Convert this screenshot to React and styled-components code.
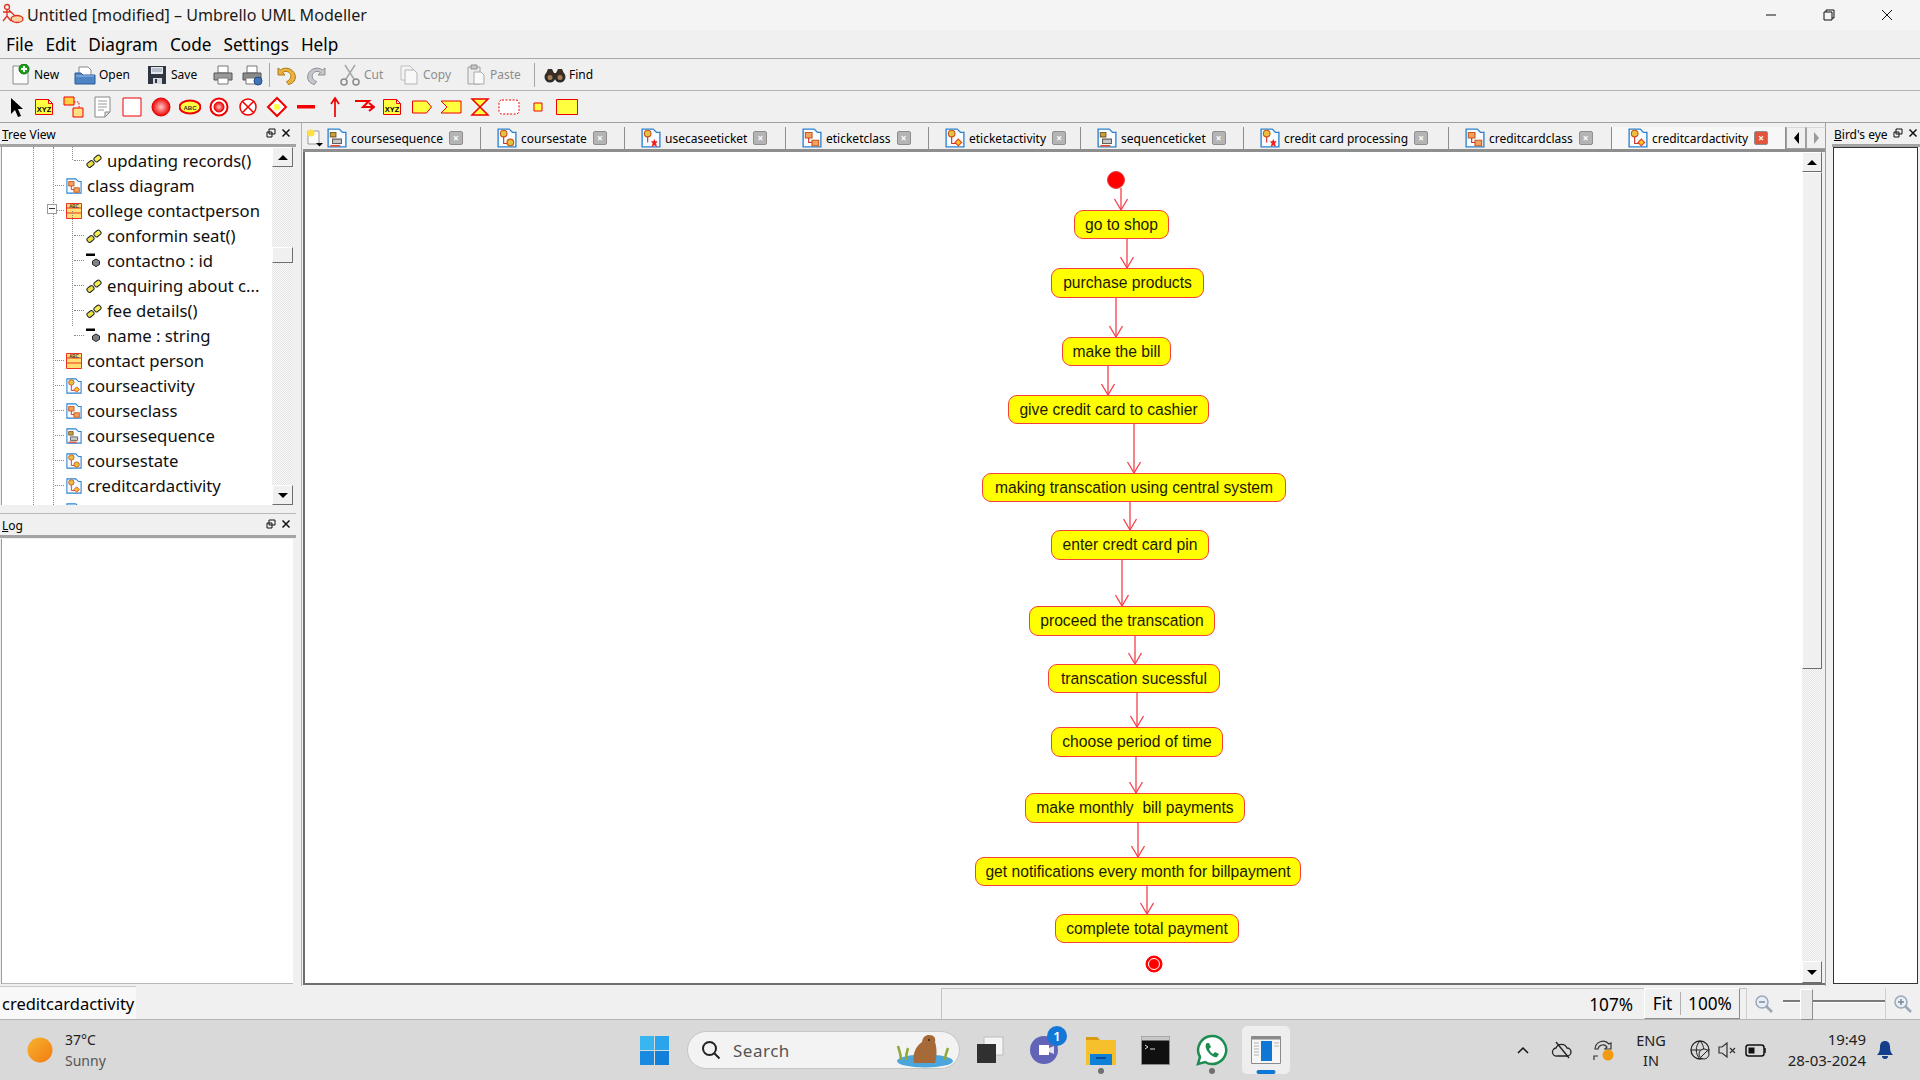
import React from "react";
import styled, { createGlobalStyle } from "styled-components";

const GlobalStyle = createGlobalStyle`
  html, body { margin: 0; padding: 0; background: #f0f0f0; }
  * { box-sizing: border-box; }
`;

const UI_FONT = `"Noto Sans", "Open Sans", sans-serif`;

const Window = styled.div`
  width: 1920px;
  height: 1080px;
  display: flex;
  flex-direction: column;
  overflow: hidden;
  font-family: ${UI_FONT};
  color: #000;
  background: #f0f0f0;
`;

const TitleBar = styled.div`
  height: 30px;
  flex: none;
  display: flex;
  align-items: center;
  background: #f4f4f4;
  padding: 0 4px 0 2px;
  font-size: 16.1px;
`;
const TitleText = styled.div`
  margin-left: 1px;
  flex: 1;
  color: #1a1a1a;
`;
const WinControl = styled.div`
  width: 58px;
  display: flex;
  justify-content: center;
`;

const MenuBar = styled.div`
  height: 29px;
  flex: none;
  display: flex;
  align-items: center;
  gap: 12px;
  padding-left: 6px;
  font-size: 17.2px;
  background: #f0f0f0;
  border-bottom: 1px solid #a8a8a8;
`;

const MainToolbar = styled.div`
  height: 32px;
  flex: none;
  display: flex;
  align-items: center;
  padding-left: 9px;
  border-bottom: 1px solid #b4b4b4;
`;
const ToolButton = styled.div`
  width: ${(p) => p.$w}px;
  flex: none;
  display: flex;
  align-items: center;
  gap: 3px;
  font-size: 12px;
  color: ${(p) => (p.$off ? "#8c8c8c" : "#000")};
`;
const ToolSep = styled.div`
  width: 1px;
  height: 24px;
  flex: none;
  background: #a6a6a6;
  margin-right: ${(p) => p.$after}px;
`;

const ShapeToolbar = styled.div`
  height: 32px;
  flex: none;
  display: flex;
  align-items: center;
  padding-left: 1px;
  border-bottom: 1px solid #a0a0a0;
`;
const ShapeCell = styled.div`
  width: 29px;
  flex: none;
  display: flex;
  justify-content: center;
`;

const Workspace = styled.div`
  height: 863px;
  flex: none;
  display: flex;
`;

const LeftDock = styled.div`
  width: 296px;
  flex: none;
  display: flex;
  flex-direction: column;
`;
const Splitter = styled.div`
  width: 7px;
  flex: none;
  padding-left: 5px;
  &::after {
    content: "";
    display: block;
    width: 1px;
    height: 100%;
    background: #b0b0b0;
  }
`;
const PanelHeader = styled.div`
  height: 24px;
  flex: none;
  display: flex;
  align-items: center;
  padding: 2px 5px 0 2px;
  font-size: 12px;
  border-bottom: 3px solid #a4a4a4;
  overflow: hidden;
  u { text-decoration: underline; }
`;
const PanelName = styled.div`
  flex: 1;
  white-space: nowrap;
  overflow: hidden;
`;
const PanelIcons = styled.div`
  display: flex;
  align-items: center;
  gap: 5px;
  flex: none;
  margin-bottom: 3px;
`;

const TreeBox = styled.div`
  height: 358px;
  flex: none;
  margin: 0 3px 0 1px;
  display: flex;
  background: #fff;
  border-left: 1px solid #9a9a9a;
  position: relative;
  overflow: hidden;
`;
const TreeRows = styled.div`
  flex: 1;
  padding-top: 1px;
  overflow: hidden;
`;
const TreeRowBox = styled.div`
  height: 25px;
  display: flex;
  align-items: center;
  padding-left: ${(p) => p.$indent}px;
  font-size: 16.7px;
  white-space: nowrap;
`;
const Connector = styled.div`
  width: ${(p) => p.$w}px;
  flex: none;
  border-bottom: 1px dotted #8a8a8a;
  margin-right: 2px;
`;
const RowLabel = styled.div`
  margin-left: 5px;
  color: #101010;
`;
const Guide = styled.div`
  position: absolute;
  left: ${(p) => p.$x}px;
  top: ${(p) => p.$top}px;
  height: ${(p) => p.$h}px;
  border-left: 1px dotted #8a8a8a;
`;
const Expander = styled.div`
  position: absolute;
  left: 45px;
  top: 57px;
  width: 10px;
  height: 10px;
  background: #fff;
  border: 1px solid #9a9a9a;
  &::after {
    content: "";
    position: absolute;
    left: 1px;
    right: 1px;
    top: 3px;
    height: 1px;
    background: #333;
  }
`;

const ScrollbarBox = styled.div`
  width: ${(p) => p.$w}px;
  flex: none;
  display: flex;
  flex-direction: column;
  background: repeating-conic-gradient(#e4e4e4 0 25%, #fafafa 0 50%) 0 0 / 2px 2px;
`;
const ScrollButton = styled.div`
  height: ${(p) => p.$h}px;
  flex: none;
  display: flex;
  align-items: center;
  justify-content: center;
  background: #f0f0f0;
  border: 1px solid;
  border-color: #fff #6e6e6e #6e6e6e #fff;
`;
const ScrollTrack = styled.div`
  flex: 1;
  padding-top: ${(p) => p.$top}px;
`;
const ScrollThumb = styled.div`
  height: ${(p) => p.$h}px;
  background: #f0f0f0;
  border: 1px solid;
  border-color: #fff #6e6e6e #6e6e6e #fff;
`;
const ArrowUp = styled.div`
  width: 0;
  height: 0;
  border: 5px solid transparent;
  border-top: 0;
  border-bottom: 5px solid #000;
`;
const ArrowDown = styled.div`
  width: 0;
  height: 0;
  border: 5px solid transparent;
  border-bottom: 0;
  border-top: 5px solid #000;
`;

const LogHeader = styled(PanelHeader)`
  margin-top: 8px;
  height: 25px;
  border-top: 1px solid #b8b8b8;
`;
const LogBody = styled.div`
  flex: 1;
  margin: 1px 3px 2px 1px;
  background: #fff;
  border-left: 1px solid #9a9a9a;
  border-bottom: 1px solid #b8b8b8;
`;

const Center = styled.div`
  width: 1523px;
  flex: none;
  display: flex;
  flex-direction: column;
  border-right: 1px solid #a0a0a0;
`;
const TabBar = styled.div`
  height: 29px;
  flex: none;
  display: flex;
  align-items: stretch;
  padding: 4px 0 0 3px;
  border-bottom: 3px solid #8e8e8e;
`;
const NewTab = styled.div`
  width: 21px;
  flex: none;
  display: flex;
  align-items: center;
`;
const Tab = styled.div`
  width: ${(p) => p.$w}px;
  flex: none;
  display: flex;
  align-items: center;
  padding-left: ${(p) => p.$pad}px;
  font-size: 12px;
  white-space: nowrap;
  background: ${(p) => (p.$active ? "#f7f7f7" : "transparent")};
  border-right: 1px solid #8e8e8e;
`;
const TabLabel = styled.div`
  margin: 0 6px 0 4px;
`;
const TabClose = styled.div`
  width: 14px;
  height: 14px;
  flex: none;
  display: flex;
  align-items: center;
  justify-content: center;
  border-radius: 2px;
  border: 1px solid #8e8e8e;
  font-size: 10px;
  line-height: 1;
  font-weight: 700;
  color: #fff;
  background: ${(p) => (p.$active ? "#e2543c" : "#b4b4b4")};
`;
const TabScroll = styled.div`
  width: 20px;
  flex: none;
  display: flex;
  align-items: center;
  justify-content: center;
  border: 1px solid #a0a0a0;
  border-top-color: #d8d8d8;
`;
const TriLeft = styled.div`
  width: 0;
  height: 0;
  border: 6px solid transparent;
  border-left: 0;
  border-right: 5px solid ${(p) => p.$c};
`;
const TriRight = styled.div`
  width: 0;
  height: 0;
  border: 6px solid transparent;
  border-right: 0;
  border-left: 5px solid ${(p) => p.$c};
`;

const CanvasFrame = styled.div`
  flex: 1;
  display: flex;
  background: #fff;
  border: 2px solid #6e6e6e;
  border-top: 0;
  border-right: 0;
  margin-bottom: 1px;
`;
const Canvas = styled.div`
  position: relative;
  flex: 1;
  overflow: hidden;
`;
const Wires = styled.svg`
  position: absolute;
  left: 0;
  top: 0;
`;
const ActivityNode = styled.div`
  position: absolute;
  left: ${(p) => p.$x}px;
  top: ${(p) => p.$y}px;
  width: ${(p) => p.$w}px;
  height: ${(p) => p.$h}px;
  display: flex;
  align-items: center;
  justify-content: center;
  background: #ffff00;
  border: 1.5px solid #f5403c;
  border-radius: 9px;
  font-family: "Liberation Sans", Arial, sans-serif;
  font-size: 15.65px;
  white-space: pre;
  color: #1a1a00;
`;
const CanvasGutter = styled.div`
  width: 3px;
  flex: none;
  background: #f0f0f0;
`;

const RightDock = styled.div`
  flex: 1;
  display: flex;
  flex-direction: column;
  margin-left: 6px;
`;
const BirdHeader = styled(PanelHeader)`
  padding-right: 2px;
`;
const BirdBody = styled.div`
  flex: 1;
  margin: 0 2px 2px 1px;
  background: #fff;
  border: 1px solid #333;
`;

const StatusBar = styled.div`
  height: 34px;
  flex: none;
  display: flex;
  align-items: stretch;
  border-bottom: 1px solid #b4b4b4;
`;
const StatusName = styled.div`
  width: 136px;
  flex: none;
  background: #f8f8f8;
  padding-left: 2px;
  font-size: 16.5px;
  display: flex;
  align-items: center;
  border-top: 1px solid #c8c8c8;
`;
const StatusMessage = styled.div`
  width: 805px;
  flex: none;
  border: 1px solid #c4c4c4;
  border-bottom: 0;
  border-right: 0;
  margin-top: 2px;
  margin-left: 805px;
  display: flex;
  justify-content: flex-end;
  align-items: center;
  font-size: 17.2px;
  padding-right: 113px;
`;
const ZoomControls = styled.div`
  flex: 1;
  display: flex;
  align-items: stretch;
  padding-top: 2px;
`;
const FitBox = styled.div`
  width: 96px;
  margin-left: -102px;
  margin-right: 6px;
  display: flex;
  align-items: center;
  font-size: 17.2px;
  background: #f0f0f0;
  border: 1px solid;
  border-color: #fff #8e8e8e #8e8e8e #fff;
  position: relative;
`;
const FitPart = styled.div`
  width: ${(p) => p.$w}px;
  text-align: center;
  border-right: ${(p) => (p.$line ? "1px solid #b0b0b0" : "0")};
`;
const ZoomButton = styled.div`
  width: ${(p) => p.$w}px;
  flex: none;
  display: flex;
  justify-content: center;
  align-items: center;
  border-left: 1px solid #d0d0d0;
`;
const SliderBox = styled.div`
  width: 102px;
  flex: none;
  margin-left: 2px;
  position: relative;
`;
const SliderLine = styled.div`
  position: absolute;
  left: 0;
  right: 0;
  top: 12px;
  height: 3px;
  background: #7a7a7a;
  border-bottom: 1px solid #fff;
`;
const SliderThumb = styled.div`
  position: absolute;
  left: 17px;
  top: 1px;
  width: 13px;
  height: 31px;
  background: #e8e8e8;
  border: 1px solid;
  border-color: #fff #8e8e8e #8e8e8e #fff;
`;

const Taskbar = styled.div`
  height: 60px;
  flex: none;
  display: flex;
  align-items: center;
  background: #d9d9d9;
`;
const Weather = styled.div`
  width: 640px;
  flex: none;
  display: flex;
  align-items: center;
  padding-left: 27px;
  gap: 12px;
`;
const WeatherText = styled.div`
  font-size: 14px;
  line-height: 21px;
  color: #222;
  span { display: block; color: #555; }
`;
const SearchPill = styled.div`
  width: 273px;
  height: 38px;
  flex: none;
  margin-left: 18px;
  margin-right: 15px;
  background: #f3f3f3;
  border: 1px solid #c6c6c6;
  border-radius: 19px;
  display: flex;
  align-items: center;
  padding: 0 2px 0 13px;
  font-size: 17px;
  color: #555;
  letter-spacing: 0.5px;
  gap: 12px;
`;
const SearchWord = styled.div`
  flex: 1;
`;
const TaskIcon = styled.div`
  width: ${(p) => p.$w}px;
  margin-right: ${(p) => p.$mr || 0}px;
  height: 48px;
  flex: none;
  display: flex;
  align-items: center;
  justify-content: center;
  border-radius: 5px;
  position: relative;
  background: ${(p) => (p.$active ? "#eeeeee" : "transparent")};
`;
const RunDot = styled.div`
  position: absolute;
  bottom: 0;
  left: 50%;
  transform: translateX(-50%);
  width: ${(p) => (p.$active ? 19 : 6)}px;
  height: ${(p) => (p.$active ? 4 : 6)}px;
  border-radius: 3px;
  background: ${(p) => (p.$active ? "#0a78d4" : "#707070")};
`;
const Badge = styled.div`
  position: absolute;
  top: 0;
  right: -3px;
  width: 20px;
  height: 20px;
  border-radius: 50%;
  background: #1277d6;
  color: #fff;
  font-size: 13px;
  font-weight: 600;
  display: flex;
  align-items: center;
  justify-content: center;
`;
const Tray = styled.div`
  flex: 1;
  display: flex;
  align-items: center;
  margin-left: 224px;
`;
const TrayItem = styled.div`
  width: ${(p) => p.$w}px;
  flex: none;
  display: flex;
  justify-content: center;
  align-items: center;
`;
const LangBox = styled.div`
  width: 44px;
  flex: none;
  font-size: 14.5px;
  line-height: 20px;
  text-align: center;
  color: #222;
  margin: 0 15px 0 13px;
`;
const ClockBox = styled.div`
  width: 100px;
  flex: none;
  padding-right: 4px;
  font-size: 15px;
  line-height: 21px;
  text-align: right;
  color: #222;
  white-space: nowrap;
`;

/* ---- drawings ---- */
const Ico = ({ s = 22, w, h, children, vb }) => (
  <svg width={w || s} height={h || s} viewBox={vb || "0 0 22 22"} style={{ display: "block", flex: "none" }}>
    {children}
  </svg>
);

const Page = () => <path d="M4 2h10l5 5v13H4z" fill="#fbfbfb" stroke="#8a8a8a" />;

const toolIcons = {
  new: (
    <>
      <Page />
      <circle cx="15" cy="5" r="5" fill="#18a518" stroke="#0c6e0c" />
      <path d="M15 2v6M12 5h6" stroke="#fff" strokeWidth="2" />
    </>
  ),
  open: (
    <>
      <path d="M5 3h9l3 3v6H5z" fill="#fff" stroke="#888" />
      <path d="M1 9h6l2 2h12v9H1z" fill="#4f84c4" stroke="#2a5a96" />
      <path d="M2 12h18" stroke="#9cc0e8" />
    </>
  ),
  save: (
    <>
      <path d="M2 2h18v18H2z" fill="#2f3640" />
      <path d="M5 3h12v7H5z" fill="#e4e8ee" />
      <path d="M6 5h10M6 7h10" stroke="#8a98a8" />
      <path d="M7 14h9v6H7z" fill="#d4d8de" />
      <path d="M9 15h2v4H9z" fill="#2f3640" />
    </>
  ),
  print: (
    <>
      <path d="M6 2h10v7H6z" fill="#fff" stroke="#777" />
      <path d="M2 9h18v7H2z" fill="#9a9a9a" stroke="#555" />
      <path d="M6 14h10v6H6z" fill="#fff" stroke="#777" />
    </>
  ),
  preview: (
    <>
      <path d="M6 2h10v7H6z" fill="#fff" stroke="#777" />
      <path d="M2 9h18v7H2z" fill="#8a8a8a" stroke="#555" />
      <path d="M5 14h9v6H5z" fill="#fff" stroke="#777" />
      <circle cx="17" cy="17" r="4" fill="#3f76b8" stroke="#1f4a80" />
    </>
  ),
  undo: <path d="M3 4v7h7L7.500 8.500c3-2 7-1 8 2 1 3-1 6-4 7l2 3c5-1 8-5 6.500-10C18 5 11 2 5.500 6z" fill="#eeb33c" stroke="#a87a18" />,
  redo: <path d="M19 4v7h-7l2.500-2.500c-3-2-7-1-8 2-1 3 1 6 4 7l-2 3c-5-1-8-5-6.500-10C4 5 11 2 16.500 6z" fill="#c4c8cc" stroke="#8c9094" />,
  cut: (
    <>
      <path d="M6 1l9 14M16 1L7 15" stroke="#a8a8a8" strokeWidth="1.500" />
      <circle cx="5" cy="18" r="3" fill="none" stroke="#8a8a8a" strokeWidth="1.500" />
      <circle cx="17" cy="18" r="3" fill="none" stroke="#8a8a8a" strokeWidth="1.500" />
    </>
  ),
  copy: (
    <>
      <path d="M3 2h9l3 3v11H3z" fill="#f4f4f4" stroke="#c0c0c0" />
      <path d="M7 6h9l3 3v11H7z" fill="#f8f8f8" stroke="#b4b4b4" />
    </>
  ),
  paste: (
    <>
      <path d="M3 3h12v17H3z" fill="#ececec" stroke="#a0a0a0" />
      <path d="M6 1h6v4H6z" fill="#c8c8c8" stroke="#909090" />
      <path d="M9 8h7l3 3v9H9z" fill="#fafafa" stroke="#a8a8a8" />
    </>
  ),
  find: (
    <>
      <circle cx="6" cy="13" r="5.500" fill="#2c2c2c" />
      <circle cx="16" cy="13" r="5.500" fill="#2c2c2c" />
      <path d="M4 5h4l2 4h2l2-4h4l3 7H1z" fill="#3a2e22" />
      <circle cx="6" cy="13.500" r="2.500" fill="#a87c50" />
      <circle cx="16" cy="13.500" r="2.500" fill="#a87c50" />
    </>
  ),
};

const RED = "#f00000";
const YEL = "#ffff40";
const NoteXYZ = () => (
  <>
    <path d="M1.500 3.500h13l4 4v11h-17z" fill={YEL} stroke={RED} />
    <path d="M14.500 3.500l4 4h-4z" fill="#fff" stroke={RED} />
    <text x="10" y="16" fontSize="7.500" fontWeight="700" textAnchor="middle" fontFamily="Liberation Sans" fill="#000">XYZ</text>
  </>
);
const shapeIcons = [
  <path key="a" d="M6 2v16l4-4 3 7 3-1-3-7h5z" fill="#000" />,
  <NoteXYZ key="b" />,
  <g key="c">
    <path d="M1 1h10v8H1z" fill="#ffd040" stroke={RED} />
    <path d="M10 12h10v9H10z" fill="#ffe080" stroke={RED} />
    <path d="M11 6h5v6" fill="none" stroke={RED} strokeDasharray="1.500 1.500" />
  </g>,
  <g key="d">
    <path d="M3 1h15v15l-5 5H3z" fill="#fff" stroke="#888" />
    <path d="M6 5h9M6 8h9M6 11h9M6 14h6" stroke="#999" />
    <path d="M13 21v-5h5z" fill="#ddd" stroke="#888" />
  </g>,
  <path key="e" d="M2 2h18v18H2z" fill="#fff" stroke={RED} />,
  <g key="f">
    <defs>
      <radialGradient id="ballG" cx="0.500" cy="0.500" r="0.500">
        <stop offset="0" stopColor="#ffc8c8" />
        <stop offset="1" stopColor="#ee0000" />
      </radialGradient>
    </defs>
    <circle cx="11" cy="11" r="9" fill="url(#ballG)" stroke="#e00000" />
  </g>,
  <g key="g">
    <ellipse cx="11" cy="11" rx="10.500" ry="6.500" fill={YEL} stroke={RED} strokeWidth="2" />
    <text x="11" y="13.500" fontSize="6" fontWeight="700" textAnchor="middle" fontFamily="Liberation Sans" fill="#333">ABC</text>
  </g>,
  <g key="h">
    <circle cx="11" cy="11" r="8.500" fill="#fff" stroke={RED} strokeWidth="2" />
    <circle cx="11" cy="11" r="5" fill="url(#ballG)" stroke={RED} />
  </g>,
  <g key="i">
    <circle cx="11" cy="11" r="8" fill="#fff" stroke={RED} strokeWidth="1.500" />
    <path d="M5.500 5.500l11 11M16.500 5.500l-11 11" stroke={RED} strokeWidth="1.500" />
  </g>,
  <g key="j">
    <path d="M11 2l9 9-9 9-9-9z" fill="#fff" stroke={RED} strokeWidth="2" />
    <path d="M7 11l4-4 4 4-4 4z" fill={YEL} transform="rotate(45 11 11)" />
  </g>,
  <path key="k" d="M2 9h18v3.500H2z" fill={RED} />,
  <path key="l" d="M11 21V3M7 8l4-6 4 6" fill="none" stroke={RED} strokeWidth="1.700" />,
  <path key="m" d="M2 5h14l-6 6h11M16 7l5 4-5 4" fill="none" stroke={RED} strokeWidth="2" />,
  <NoteXYZ key="n" />,
  <path key="o" d="M1.500 5h14l5 6-5 6h-14z" fill={YEL} stroke={RED} />,
  <path key="p" d="M1 5h20v12H1l6-6z" fill={YEL} stroke={RED} />,
  <path key="q" d="M3 3h16l-8 8 8 8H3l8-8z" fill={YEL} stroke={RED} strokeWidth="1.500" />,
  <rect key="r" x="1" y="4" width="20" height="14" rx="3" fill="#fff" stroke={RED} strokeDasharray="2 1.500" />,
  <path key="s" d="M7 7h8v8H7z" fill={YEL} stroke={RED} />,
  <path key="t" d="M0.500 3.500h21v15h-21z" fill={YEL} stroke={RED} />,
];

const DiagramIcon = ({ kind, s = 18 }) => {
  const inner = {
    cls: (
      <>
        <path d="M3 4h6v5H3z" fill="#f4a060" stroke="#c85818" />
        <path d="M9 11h6v5H9z" fill="#f4a060" stroke="#c85818" />
        <path d="M6 9v4h3" fill="none" stroke="#d03020" />
      </>
    ),
    act: (
      <>
        <circle cx="6" cy="5" r="3" fill="#e8c040" stroke="#c85818" />
        <path d="M6 8v6h4" fill="none" stroke="#d03020" />
        <path d="M12 10l3 3-3 3-3-3z" fill="#ffc020" stroke="#e04020" />
      </>
    ),
    state: (
      <>
        <circle cx="6" cy="5" r="3" fill="#e8c040" stroke="#c85818" />
        <path d="M6 8v6h3" fill="none" stroke="#d03020" />
        <circle cx="12" cy="13" r="3" fill="#e8c040" stroke="#c85818" />
      </>
    ),
    seq: (
      <>
        <path d="M3 4h5v4H3z" fill="#c8a040" stroke="#806020" />
        <path d="M5 10h8v4H5z" fill="#c8c8c8" stroke="#606060" />
        <path d="M3 16h9" stroke="#e05030" strokeWidth="1.500" />
      </>
    ),
    use: (
      <>
        <circle cx="6" cy="5" r="3" fill="#e8c040" stroke="#c85818" />
        <path d="M6 8v5" fill="none" stroke="#d03020" />
        <path d="M12 10l1 2h2l-1.500 2 1 3-2.500-1.500L9.500 17l1-3L9 12h2z" fill="#f02020" />
      </>
    ),
  }[kind];
  return (
    <Ico s={s} vb="0 0 18 18">
      <path d="M1 1h10l3 3h3v13H1z" fill="#f8fbff" stroke="#2a82d0" strokeWidth="1.200" />
      {inner}
    </Ico>
  );
};

const OpIcon = () => (
  <Ico s={16} vb="0 0 16 16">
    <rect x="1" y="8.500" width="7" height="5" rx="1.800" transform="rotate(-38 4.500 11)" fill="#e8e040" stroke="#222" />
    <rect x="8" y="3" width="7" height="5" rx="1.800" transform="rotate(-38 11.500 5.500)" fill="#f4ee50" stroke="#222" />
  </Ico>
);
const AttrIcon = () => (
  <Ico s={16} vb="0 0 16 16">
    <path d="M0 0.500h9V3H0z" fill="#000" />
    <path d="M6.500 8l3.500-2 3.500 2v3.500L10 13.500 6.500 11.500z" fill="#808088" stroke="#222" />
  </Ico>
);
const ClassIcon = () => (
  <Ico s={16} vb="0 0 16 16">
    <path d="M0.500 0.500h15v15H0.500z" fill="#ffe070" stroke="#f03020" />
    <path d="M0.500 5h15M0.500 10h15" stroke="#f03020" />
    <text x="8" y="4.500" fontSize="4.500" fontWeight="700" textAnchor="middle" fontFamily="Liberation Sans" fill="#333">ABC</text>
  </Ico>
);

const treeRows = [
  { t: "updating records()", lvl: 1, ic: <OpIcon /> },
  { t: "class diagram", lvl: 0, ic: <DiagramIcon kind="cls" s={16} /> },
  { t: "college contactperson", lvl: 0, ic: <ClassIcon /> },
  { t: "conformin seat()", lvl: 1, ic: <OpIcon /> },
  { t: "contactno : id", lvl: 1, ic: <AttrIcon /> },
  { t: "enquiring about c...", lvl: 1, ic: <OpIcon /> },
  { t: "fee details()", lvl: 1, ic: <OpIcon /> },
  { t: "name : string", lvl: 1, ic: <AttrIcon /> },
  { t: "contact person", lvl: 0, ic: <ClassIcon /> },
  { t: "courseactivity", lvl: 0, ic: <DiagramIcon kind="act" s={16} /> },
  { t: "courseclass", lvl: 0, ic: <DiagramIcon kind="cls" s={16} /> },
  { t: "coursesequence", lvl: 0, ic: <DiagramIcon kind="seq" s={16} /> },
  { t: "coursestate", lvl: 0, ic: <DiagramIcon kind="state" s={16} /> },
  { t: "creditcardactivity", lvl: 0, ic: <DiagramIcon kind="act" s={16} /> },
  { t: "creditcardclass", lvl: 0, ic: <DiagramIcon kind="cls" s={16} /> },
];

const tabs = [
  { t: "coursesequence", k: "seq", w: 154, pad: 0 },
  { t: "coursestate", k: "state", w: 144, pad: 16 },
  { t: "usecaseeticket", k: "use", w: 161, pad: 16 },
  { t: "eticketclass", k: "cls", w: 143, pad: 16 },
  { t: "eticketactivity", k: "act", w: 152, pad: 16 },
  { t: "sequenceticket", k: "seq", w: 163, pad: 16 },
  { t: "credit card processing", k: "use", w: 205, pad: 16 },
  { t: "creditcardclass", k: "cls", w: 163, pad: 16 },
  { t: "creditcardactivity", k: "act", w: 174, pad: 16, active: true },
];

// page coordinates of the diagram, canvas starts at (305, 152)
const OX = 305;
const OY = 152;
const nodes = [
  { t: "go to shop", x: 1074, y: 210, r: 1169, b: 239 },
  { t: "purchase products", x: 1051, y: 268, r: 1204, b: 298 },
  { t: "make the bill", x: 1062, y: 337, r: 1171, b: 366 },
  { t: "give credit card to cashier", x: 1008, y: 395, r: 1209, b: 424 },
  { t: "making transcation using central system", x: 982, y: 473, r: 1286, b: 502 },
  { t: "enter credt card pin", x: 1051, y: 530, r: 1209, b: 560 },
  { t: "proceed the transcation", x: 1029, y: 606, r: 1215, b: 636 },
  { t: "transcation sucessful", x: 1048, y: 664, r: 1220, b: 693 },
  { t: "choose period of time", x: 1051, y: 727, r: 1223, b: 757 },
  { t: "make monthly  bill payments", x: 1025, y: 793, r: 1245, b: 823 },
  { t: "get notifications every month for billpayment", x: 975, y: 857, r: 1301, b: 886 },
  { t: "complete total payment", x: 1055, y: 914, r: 1239, b: 943 },
];
const wires = [
  [1121, 188, 210],
  [1127, 239, 268],
  [1116, 298, 337],
  [1108, 366, 395],
  [1134, 424, 473],
  [1130, 502, 530],
  [1122, 560, 606],
  [1135, 636, 664],
  [1137, 693, 727],
  [1136, 757, 793],
  [1138, 823, 857],
  [1147, 886, 914],
];

const PanelButtons = () => (
  <PanelIcons>
    <Ico s={10} vb="0 0 10 10">
      <path d="M3 1h6v5H3zM1 4h5v5H1z" fill="#f0f0f0" stroke="#111" />
    </Ico>
    <Ico s={10} vb="0 0 10 10">
      <path d="M1.500 1.500l7 7M8.500 1.500l-7 7" stroke="#111" strokeWidth="1.500" />
    </Ico>
  </PanelIcons>
);

const Scrollbar = ({ w, top, thumb, up = 20, down = 20 }) => (
  <ScrollbarBox $w={w}>
    <ScrollButton $h={up}>
      <ArrowUp />
    </ScrollButton>
    <ScrollTrack $top={top}>
      <ScrollThumb $h={thumb} />
    </ScrollTrack>
    <ScrollButton $h={down}>
      <ArrowDown />
    </ScrollButton>
  </ScrollbarBox>
);

const MagIcon = ({ plus }) => (
  <Ico s={20} vb="0 0 20 20">
    <circle cx="8" cy="8" r="6" fill="#e8eef6" stroke="#9aa8b8" strokeWidth="1.500" />
    <path d="M12 12l6 6" stroke="#9aa8b8" strokeWidth="2.500" />
    <path d={plus ? "M5 8h6M8 5v6" : "M5 8h6"} stroke="#7a8898" strokeWidth="1.500" />
  </Ico>
);

export default function App() {
  return (
    <Window>
      <GlobalStyle />
      <TitleBar>
        <Ico s={24} vb="0 0 24 24">
          <circle cx="5" cy="4" r="2.500" fill="none" stroke="#e03020" strokeWidth="1.300" />
          <path d="M5 7v6M1 9h8M5 13l-4 5M5 13l4 5M7 7l7 7" fill="none" stroke="#e03020" strokeWidth="1.300" />
          <ellipse cx="15" cy="16" rx="6" ry="3.500" fill="#ffd0a0" stroke="#e03020" strokeWidth="1.300" />
        </Ico>
        <TitleText>Untitled [modified] – Umbrello UML Modeller</TitleText>
        <WinControl>
          <Ico s={12} vb="0 0 12 12">
            <path d="M1 6h10" stroke="#111" />
          </Ico>
        </WinControl>
        <WinControl>
          <Ico s={12} vb="0 0 12 12">
            <path d="M3 3V1h8v8H9M1 3h8v8H1z" fill="none" stroke="#111" />
          </Ico>
        </WinControl>
        <WinControl>
          <Ico s={12} vb="0 0 12 12">
            <path d="M1 1l10 10M11 1L1 11" stroke="#111" />
          </Ico>
        </WinControl>
      </TitleBar>

      <MenuBar>
        {["File", "Edit", "Diagram", "Code", "Settings", "Help"].map((m) => (
          <div key={m}>{m}</div>
        ))}
      </MenuBar>

      <MainToolbar>
        <ToolButton $w={65}><Ico>{toolIcons.new}</Ico>New</ToolButton>
        <ToolButton $w={72}><Ico>{toolIcons.open}</Ico>Open</ToolButton>
        <ToolButton $w={66}><Ico>{toolIcons.save}</Ico>Save</ToolButton>
        <ToolButton $w={29}><Ico>{toolIcons.print}</Ico></ToolButton>
        <ToolButton $w={28}><Ico>{toolIcons.preview}</Ico></ToolButton>
        <ToolSep $after={5} />
        <ToolButton $w={31}><Ico>{toolIcons.undo}</Ico></ToolButton>
        <ToolButton $w={33}><Ico>{toolIcons.redo}</Ico></ToolButton>
        <ToolButton $w={59} $off><Ico>{toolIcons.cut}</Ico>Cut</ToolButton>
        <ToolButton $w={67} $off><Ico>{toolIcons.copy}</Ico>Copy</ToolButton>
        <ToolButton $w={69} $off><Ico>{toolIcons.paste}</Ico>Paste</ToolButton>
        <ToolSep $after={9} />
        <ToolButton $w={70}><Ico>{toolIcons.find}</Ico>Find</ToolButton>
      </MainToolbar>

      <ShapeToolbar>
        {shapeIcons.map((ic, i) => (
          <ShapeCell key={i}>
            <Ico>{ic}</Ico>
          </ShapeCell>
        ))}
      </ShapeToolbar>

      <Workspace>
        <LeftDock>
          <PanelHeader>
            <PanelName><u>T</u>ree View</PanelName>
            <PanelButtons />
          </PanelHeader>
          <TreeBox>
            <TreeRows>
              {treeRows.map((r) => (
                <TreeRowBox key={r.t} $indent={r.lvl ? 72 : 53}>
                  <Connector $w={r.lvl ? 10 : 9} />
                  {r.ic}
                  <RowLabel>{r.t}</RowLabel>
                </TreeRowBox>
              ))}
            </TreeRows>
            <Guide $x={31} $top={0} $h={358} />
            <Guide $x={51} $top={0} $h={358} />
            <Guide $x={70} $top={0} $h={13} />
            <Guide $x={70} $top={64} $h={115} />
            <Expander />
            <Scrollbar w={21} top={80} thumb={16} />
          </TreeBox>
          <LogHeader>
            <PanelName><u>L</u>og</PanelName>
            <PanelButtons />
          </LogHeader>
          <LogBody />
        </LeftDock>
        <Splitter />

        <Center>
          <TabBar>
            <NewTab>
              <Ico s={20} vb="0 0 20 20">
                <path d="M2 3h11v13H2z" fill="#fafafa" stroke="#999" />
                <circle cx="5" cy="5" r="3.500" fill="#ffe040" />
                <path d="M10 15h7l-3.500 3.500z" fill="#000" />
              </Ico>
            </NewTab>
            {tabs.map((t) => (
              <Tab key={t.t} $w={t.w} $pad={t.pad} $active={t.active}>
                <DiagramIcon kind={t.k} s={20} />
                <TabLabel>{t.t}</TabLabel>
                <TabClose $active={t.active}>×</TabClose>
              </Tab>
            ))}
            <TabScroll><TriLeft $c="#000" /></TabScroll>
            <TabScroll><TriRight $c="#9a9a9a" /></TabScroll>
          </TabBar>
          <CanvasFrame>
            <Canvas>
              <Wires width="1500" height="840">
                {wires.map(([x, y1, y2], i) => {
                  const px = x - OX;
                  const a = y1 - OY;
                  const b = y2 - OY;
                  return (
                    <g key={i} fill="none" stroke="#f4404a" strokeWidth="1.300">
                      <path d={`M${px} ${a}V${b}`} />
                      <path d={`M${px - 6.500} ${b - 11}L${px} ${b}L${px + 6.500} ${b - 11}`} />
                    </g>
                  );
                })}
                <circle cx={1116 - OX} cy={180 - OY} r="8.500" fill="#ff0000" stroke="#e84040" />
                <circle cx={1154 - OX} cy={964 - OY} r="8" fill="#ff0000" stroke="#ff0000" />
                <circle cx={1154 - OX} cy={964 - OY} r="5.500" fill="#ff0000" stroke="#ffffff" />
              </Wires>
              {nodes.map((n) => (
                <ActivityNode key={n.t} $x={n.x - OX} $y={n.y - OY} $w={n.r - n.x} $h={n.b - n.y}>
                  {n.t}
                </ActivityNode>
              ))}
            </Canvas>
            <Scrollbar w={20} top={0} thumb={497} up={20} down={22} />
            <CanvasGutter />
          </CanvasFrame>
        </Center>

        <RightDock>
          <BirdHeader>
            <PanelName>
              <u>B</u>ird's eye
            </PanelName>
            <PanelButtons />
          </BirdHeader>
          <BirdBody />
        </RightDock>
      </Workspace>

      <StatusBar>
        <StatusName>creditcardactivity</StatusName>
        <StatusMessage>107%</StatusMessage>
        <ZoomControls>
          <FitBox>
            <FitPart $w={36} $line>Fit</FitPart>
            <FitPart $w={58}>100%</FitPart>
          </FitBox>
          <ZoomButton $w={35}><MagIcon /></ZoomButton>
          <SliderBox>
            <SliderLine />
            <SliderThumb />
          </SliderBox>
          <ZoomButton $w={35}><MagIcon plus /></ZoomButton>
        </ZoomControls>
      </StatusBar>

      <Taskbar>
        <Weather>
          <Ico s={26} vb="0 0 26 26">
            <defs>
              <linearGradient id="sunG" x1="0" y1="0" x2="1" y2="1">
                <stop offset="0" stopColor="#f5b52e" />
                <stop offset="1" stopColor="#f47a10" />
              </linearGradient>
            </defs>
            <circle cx="13" cy="13" r="12.500" fill="url(#sunG)" />
          </Ico>
          <WeatherText>
            37°C
            <span>Sunny</span>
          </WeatherText>
        </Weather>
        <Ico s={29} vb="0 0 29 29">
          <path d="M0 0h14v14H0z" fill="#38b6f0" />
          <path d="M15 0h14v14H15z" fill="#2aa4ea" />
          <path d="M0 15h14v14H0z" fill="#1a8ae0" />
          <path d="M15 15h14v14H15z" fill="#1280d8" />
        </Ico>
        <SearchPill>
          <Ico s={20} vb="0 0 20 20">
            <circle cx="8.500" cy="8.500" r="6.500" fill="none" stroke="#222" strokeWidth="2" />
            <path d="M13 13l5.500 5.500" stroke="#222" strokeWidth="2" />
          </Ico>
          <SearchWord>Search</SearchWord>
          <Ico w={64} h={36} vb="0 0 60 36">
            <ellipse cx="30" cy="29" rx="28" ry="6.500" fill="#4aa6dc" />
            <path d="M6 28c0-6-2-10-3-14M11 28c0-5 1-9 2-12M50 28c0-5 2-9 3-12" stroke="#8ca838" strokeWidth="2.500" fill="none" />
            <path d="M19 31c-2-9 2-17 8-21 1-5 3-7 7-7 5 0 7 3 6 7 2 6 2 14 0 21z" fill="#a66a38" />
            <circle cx="34" cy="8" r="1" fill="#222" />
          </Ico>
        </SearchPill>
        <TaskIcon $w={30} $mr={23}>
          <Ico s={28} vb="0 0 28 28">
            <path d="M8 1h19v18H8z" fill="#f4f4f4" stroke="#bbb" />
            <path d="M1 8h19v19H1z" fill="#303030" />
          </Ico>
        </TaskIcon>
        <TaskIcon $w={36} $mr={20}>
          <Ico s={34} vb="0 0 34 34">
            <circle cx="15" cy="17" r="14" fill="#6264b8" />
            <path d="M15 31l-6-4 8 0z" fill="#6264b8" />
            <path d="M10 12h10v10H10z" fill="#fff" />
            <path d="M20 15l5-2v8l-5-2z" fill="#e0e0f4" />
          </Ico>
          <Badge>1</Badge>
        </TaskIcon>
        <TaskIcon $w={34} $mr={22}>
          <Ico s={32} vb="0 0 32 32">
            <path d="M1 3h11l3 3h16v25H1z" fill="#f5c02c" />
            <path d="M1 3h11l3 3H1z" fill="#d89a10" />
            <path d="M5 20h22v11H5z" fill="#0e80d8" />
            <path d="M11 24h10" stroke="#0a4a90" strokeWidth="2" />
          </Ico>
          <RunDot />
        </TaskIcon>
        <TaskIcon $w={30} $mr={25}>
          <Ico s={29} vb="0 0 29 29">
            <path d="M0.500 0.500h28v28h-28z" fill="#101010" stroke="#8a8a8a" />
            <path d="M0.500 0.500h28v4h-28z" fill="#c8c8c8" />
            <path d="M4 9l3 2-3 2M9 13h5" stroke="#ddd" fill="none" />
          </Ico>
        </TaskIcon>
        <TaskIcon $w={34} $mr={13}>
          <Ico s={32} vb="0 0 32 32">
            <path d="M16 2a14 14 0 0 0-12 21L2 30l7-2A14 14 0 1 0 16 2z" fill="#fff" stroke="#1c8c50" strokeWidth="2.500" />
            <path d="M11 9c-2 1-2 5 1 9s7 6 9 5l2-3-4-2-2 2c-2-1-3-3-4-5l2-2-2-4z" fill="#1c8c50" />
          </Ico>
          <RunDot />
        </TaskIcon>
        <TaskIcon $w={48} $active>
          <Ico s={30} vb="0 0 30 30">
            <path d="M0.500 1.500h29v27h-29z" fill="#f6f6f6" stroke="#8a8a8a" />
            <path d="M0.500 1.500h29v3h-29z" fill="#8a8a8a" />
            <path d="M10 6h11v20H10z" fill="#1078d4" />
            <path d="M3 8h5M3 11h5M3 14h5M3 17h5M3 20h5M23 8h5M23 11h5" stroke="#b4b4b4" />
          </Ico>
          <RunDot $active />
        </TaskIcon>
        <Tray>
          <TrayItem $w={18}>
            <Ico s={14} vb="0 0 14 14">
              <path d="M2 10l5-5 5 5" fill="none" stroke="#111" strokeWidth="1.500" />
            </Ico>
          </TrayItem>
          <TrayItem $w={60}>
            <Ico s={22} vb="0 0 22 22">
              <path d="M6 17a4 4 0 0 1-1-8 6 6 0 0 1 11 0 4 4 0 0 1 0 8z" fill="#d9d9d9" stroke="#222" strokeWidth="1.300" />
              <path d="M5 3l13 16" stroke="#222" strokeWidth="1.300" />
            </Ico>
          </TrayItem>
          <TrayItem $w={24}>
            <Ico s={24} vb="0 0 24 24">
              <path d="M3 11a8 8 0 0 1 14-5l2-1v6h-6l2-2a5 5 0 0 0-9 2zM6 18H2v4" fill="none" stroke="#333" strokeWidth="1.200" />
              <circle cx="16" cy="17" r="5.500" fill="#f49a10" />
            </Ico>
          </TrayItem>
          <LangBox>
            ENG
            <br />
            IN
          </LangBox>
          <TrayItem $w={24}>
            <Ico s={22} vb="0 0 22 22">
              <circle cx="11" cy="11" r="9" fill="none" stroke="#222" strokeWidth="1.300" />
              <path d="M2 11h18M11 2c-5 5-5 13 0 18M11 2c5 5 5 13 0 18" fill="none" stroke="#222" />
              <circle cx="15" cy="15" r="5" fill="#d9d9d9" stroke="#222" />
              <path d="M12 18l6-6" stroke="#222" />
            </Ico>
          </TrayItem>
          <TrayItem $w={30}>
            <Ico s={20} vb="0 0 20 20">
              <path d="M2 7h3l5-4v14l-5-4H2z" fill="none" stroke="#333" strokeWidth="1.200" />
              <path d="M13 8l5 5M18 8l-5 5" stroke="#333" strokeWidth="1.200" />
            </Ico>
          </TrayItem>
          <TrayItem $w={28}>
            <Ico s={22} vb="0 0 22 22">
              <rect x="1" y="6" width="18" height="11" rx="2.500" fill="none" stroke="#111" strokeWidth="1.500" />
              <path d="M3.500 8.500h6v6h-6z" fill="#111" />
              <path d="M20 9v5" stroke="#111" strokeWidth="1.500" />
            </Ico>
          </TrayItem>
          <ClockBox>
            19:49
            <br />
            28-03-2024
          </ClockBox>
          <TrayItem $w={30}>
            <Ico s={20} vb="0 0 20 20">
              <path d="M10 1c-3 0-5 2-5 6 0 4-1 6-3 8h16c-2-2-3-4-3-8 0-4-2-6-5-6z" fill="#123e8c" />
              <path d="M7 16a3 3 0 0 0 6 0z" fill="#123e8c" />
            </Ico>
          </TrayItem>
        </Tray>
      </Taskbar>
    </Window>
  );
}
